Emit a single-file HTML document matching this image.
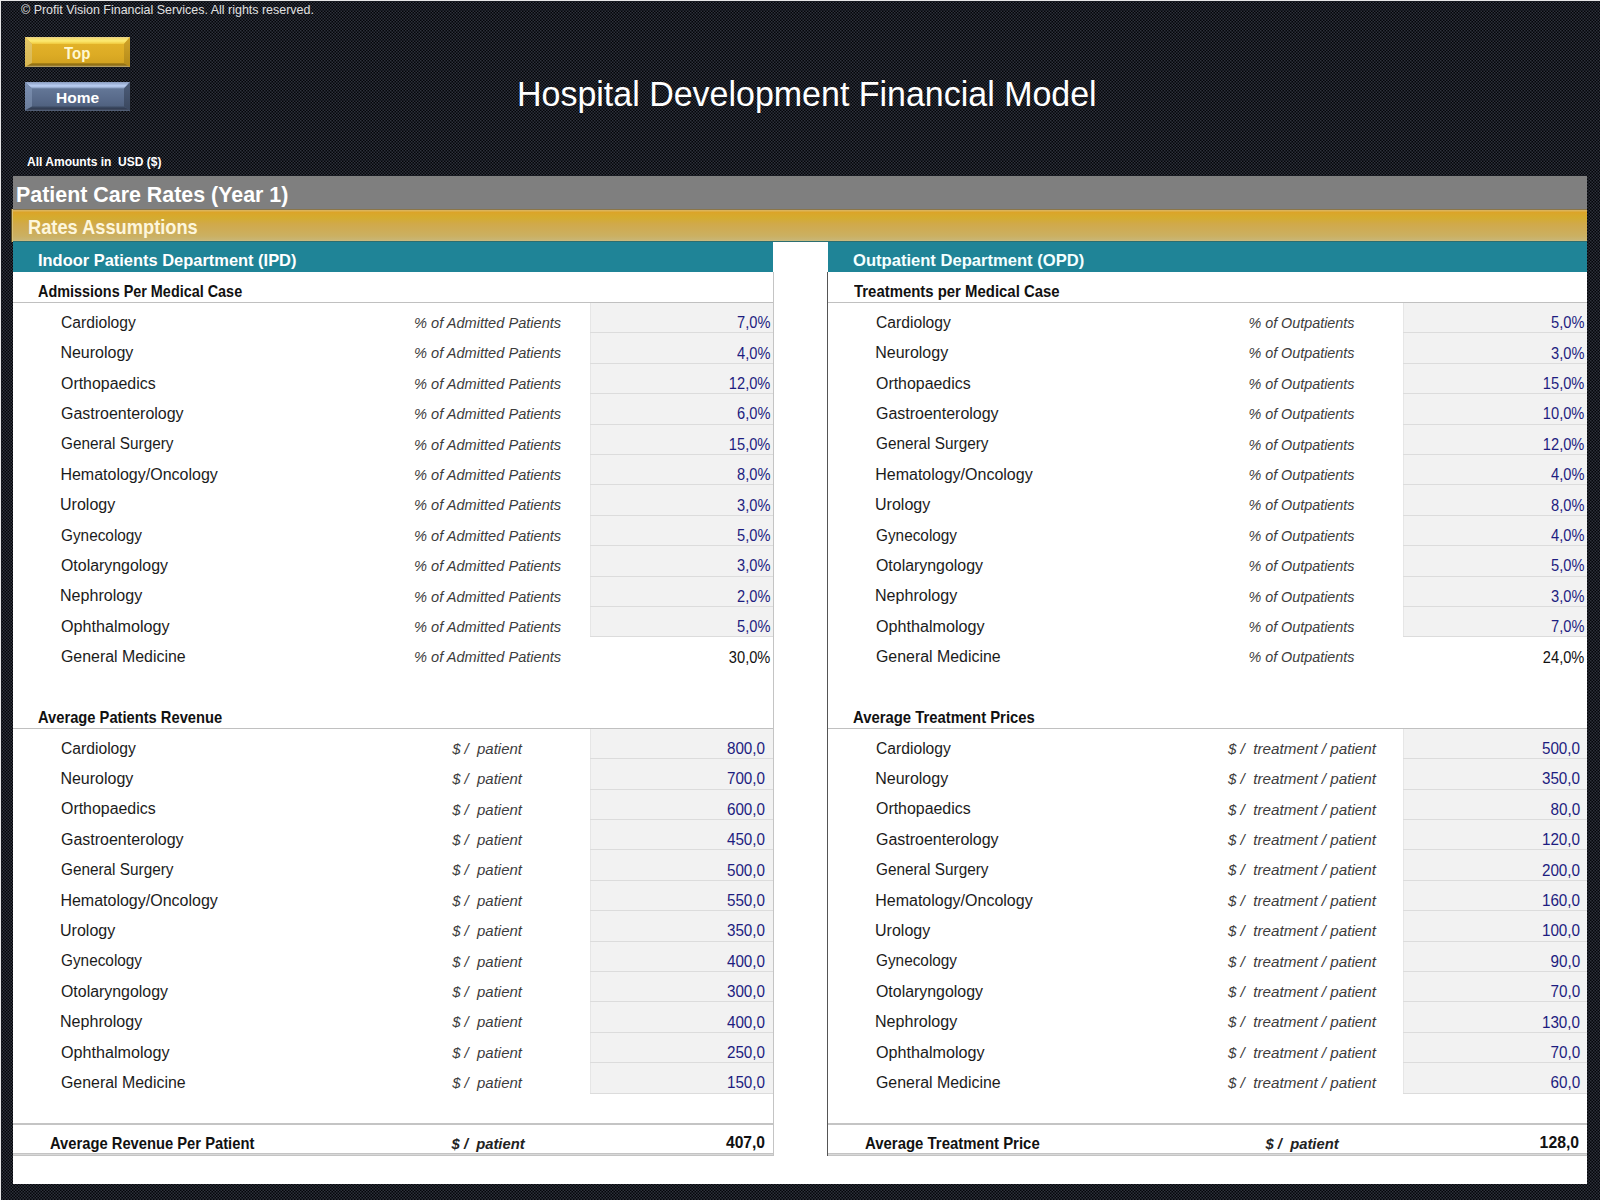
<!DOCTYPE html>
<html><head><meta charset="utf-8"><title>Hospital Development Financial Model</title>
<style>
html,body{margin:0;padding:0;width:1600px;height:1200px;overflow:hidden;}
body{position:relative;font-family:'Liberation Sans', sans-serif;}
#bg{position:absolute;left:0;top:0;width:1600px;height:1200px;background:#181b22;}
.edge{position:absolute;background:#e8e8e8;}
.t{position:absolute;white-space:pre;line-height:1;}
.cell{position:absolute;background:#f2f2f2;box-shadow:inset 1px 0 0 #e6e6e6;}
.hl{position:absolute;height:1px;}
.btn{position:absolute;left:25px;width:105px;}
.btn div{position:absolute;left:0;top:0;width:100%;height:100%;}
.btn.top{top:37px;height:30px;background:linear-gradient(#e6b62c,#dcab24 60%,#cf9f1e);}
.btn.top .t1{clip-path:polygon(0 0,100% 0,calc(100% - 6px) 7px,7px 7px);background:linear-gradient(#e6cf86 0,#f6e070 2px,#fcea70 4px,#f0c83c 7px);}
.btn.top .t2{clip-path:polygon(0 0,7px 7px,7px calc(100% - 4px),0 100%);background:linear-gradient(#e2c668,#d8b650);}
.btn.top .t3{clip-path:polygon(100% 0,100% 100%,calc(100% - 6px) calc(100% - 4px),calc(100% - 6px) 7px);background:linear-gradient(#d0a42a,#b48a18);}
.btn.top .t4{clip-path:polygon(0 100%,7px calc(100% - 4px),calc(100% - 6px) calc(100% - 4px),100% 100%);background:linear-gradient(#b08818 0,#b08818 calc(100% - 4px),#8a6a12 calc(100% - 2px),#c4b07a 100%);}
.btn.home{top:82px;height:28.5px;background:linear-gradient(#6a7e9e,#586a8a 60%,#4a5b78);}
.btn.home .t1{clip-path:polygon(0 0,100% 0,calc(100% - 6px) 6.5px,7px 6.5px);background:linear-gradient(#8a9cbe 0,#a8bce0 2.5px,#bcd0f4 4px,#7e92b4 6.5px);}
.btn.home .t2{clip-path:polygon(0 0,7px 6.5px,7px calc(100% - 4px),0 100%);background:linear-gradient(#7c90b2,#6a7c9a);}
.btn.home .t3{clip-path:polygon(100% 0,100% 100%,calc(100% - 6px) calc(100% - 4px),calc(100% - 6px) 6.5px);background:linear-gradient(#4c5c78,#3a475e);}
.btn.home .t4{clip-path:polygon(0 100%,7px calc(100% - 4px),calc(100% - 6px) calc(100% - 4px),100% 100%);background:linear-gradient(#3c4a62 0,#3c4a62 calc(100% - 4px),#303a50 calc(100% - 2px),#646c7c 100%);}
</style></head><body>
<svg id="bg" width="1600" height="1200" shape-rendering="crispEdges"><defs><pattern id="p" width="3" height="3" patternUnits="userSpaceOnUse"><rect width="3" height="3" fill="#181b22"/><rect x="0" y="0" width="1" height="1" fill="#2e313b"/><rect x="2" y="2" width="1" height="1" fill="#2e313b"/><rect x="2" y="0" width="1" height="1" fill="#040508"/><rect x="0" y="2" width="1" height="1" fill="#040508"/></pattern></defs><rect width="1600" height="1200" fill="url(#p)"/></svg>
<div class="edge" style="left:0;top:0;width:1600px;height:1px"></div>
<div class="edge" style="left:0;top:0;width:1px;height:1200px"></div>
<div class="btn top"><div class="t1"></div><div class="t2"></div><div class="t3"></div><div class="t4"></div></div>
<div class="btn home"><div class="t1"></div><div class="t2"></div><div class="t3"></div><div class="t4"></div></div>
<div style="position:absolute;left:13px;top:176px;width:1574px;height:33px;background:#7f7f7f"></div>
<div style="position:absolute;left:11px;top:208.6px;width:1576px;height:33.4px;background:linear-gradient(#8a7548 0,#8a7548 1px,#dcb45a 1px,#dcb45a 2px,#dca428 3px,#d4ac30 9px,#d1a94a 15px,#cbb062 27px,#c9b674 31px,#cbc08e 32.4px,#2c6e70 32.4px);box-shadow:inset 1px 0 0 #5e4e22,inset 2px 0 0 #d8c27c"></div>
<div style="position:absolute;left:13px;top:242px;width:1574px;height:942px;background:#fff"></div>
<div style="position:absolute;left:13px;top:242px;width:760px;height:30px;background:#1f8497"></div>
<div style="position:absolute;left:828px;top:242px;width:759px;height:30px;background:#1f8497"></div>
<div class="cell" style="left:589.5px;top:302.4px;width:183.5px;height:334.4px"></div><div class="hl" style="left:589.5px;top:332.3px;width:183.5px;background:#dcdcdc"></div><div class="hl" style="left:589.5px;top:362.7px;width:183.5px;background:#dcdcdc"></div><div class="hl" style="left:589.5px;top:393.1px;width:183.5px;background:#dcdcdc"></div><div class="hl" style="left:589.5px;top:423.5px;width:183.5px;background:#dcdcdc"></div><div class="hl" style="left:589.5px;top:453.9px;width:183.5px;background:#dcdcdc"></div><div class="hl" style="left:589.5px;top:484.3px;width:183.5px;background:#dcdcdc"></div><div class="hl" style="left:589.5px;top:514.7px;width:183.5px;background:#dcdcdc"></div><div class="hl" style="left:589.5px;top:545.1px;width:183.5px;background:#dcdcdc"></div><div class="hl" style="left:589.5px;top:575.5px;width:183.5px;background:#dcdcdc"></div><div class="hl" style="left:589.5px;top:605.9px;width:183.5px;background:#dcdcdc"></div><div class="hl" style="left:589.5px;top:636.3px;width:183.5px;background:#dcdcdc"></div><div class="cell" style="left:1402.5px;top:302.4px;width:184.5px;height:334.4px"></div><div class="hl" style="left:1402.5px;top:332.3px;width:184.5px;background:#dcdcdc"></div><div class="hl" style="left:1402.5px;top:362.7px;width:184.5px;background:#dcdcdc"></div><div class="hl" style="left:1402.5px;top:393.1px;width:184.5px;background:#dcdcdc"></div><div class="hl" style="left:1402.5px;top:423.5px;width:184.5px;background:#dcdcdc"></div><div class="hl" style="left:1402.5px;top:453.9px;width:184.5px;background:#dcdcdc"></div><div class="hl" style="left:1402.5px;top:484.3px;width:184.5px;background:#dcdcdc"></div><div class="hl" style="left:1402.5px;top:514.7px;width:184.5px;background:#dcdcdc"></div><div class="hl" style="left:1402.5px;top:545.1px;width:184.5px;background:#dcdcdc"></div><div class="hl" style="left:1402.5px;top:575.5px;width:184.5px;background:#dcdcdc"></div><div class="hl" style="left:1402.5px;top:605.9px;width:184.5px;background:#dcdcdc"></div><div class="hl" style="left:1402.5px;top:636.3px;width:184.5px;background:#dcdcdc"></div><div class="cell" style="left:589.5px;top:728.2px;width:183.5px;height:364.8px"></div><div class="hl" style="left:589.5px;top:758.1px;width:183.5px;background:#dcdcdc"></div><div class="hl" style="left:589.5px;top:788.5px;width:183.5px;background:#dcdcdc"></div><div class="hl" style="left:589.5px;top:818.9px;width:183.5px;background:#dcdcdc"></div><div class="hl" style="left:589.5px;top:849.3px;width:183.5px;background:#dcdcdc"></div><div class="hl" style="left:589.5px;top:879.7px;width:183.5px;background:#dcdcdc"></div><div class="hl" style="left:589.5px;top:910.1px;width:183.5px;background:#dcdcdc"></div><div class="hl" style="left:589.5px;top:940.5px;width:183.5px;background:#dcdcdc"></div><div class="hl" style="left:589.5px;top:970.9px;width:183.5px;background:#dcdcdc"></div><div class="hl" style="left:589.5px;top:1001.3px;width:183.5px;background:#dcdcdc"></div><div class="hl" style="left:589.5px;top:1031.7px;width:183.5px;background:#dcdcdc"></div><div class="hl" style="left:589.5px;top:1062.1px;width:183.5px;background:#dcdcdc"></div><div class="hl" style="left:589.5px;top:1092.5px;width:183.5px;background:#dcdcdc"></div><div class="cell" style="left:1402.5px;top:728.2px;width:184.5px;height:364.8px"></div><div class="hl" style="left:1402.5px;top:758.1px;width:184.5px;background:#dcdcdc"></div><div class="hl" style="left:1402.5px;top:788.5px;width:184.5px;background:#dcdcdc"></div><div class="hl" style="left:1402.5px;top:818.9px;width:184.5px;background:#dcdcdc"></div><div class="hl" style="left:1402.5px;top:849.3px;width:184.5px;background:#dcdcdc"></div><div class="hl" style="left:1402.5px;top:879.7px;width:184.5px;background:#dcdcdc"></div><div class="hl" style="left:1402.5px;top:910.1px;width:184.5px;background:#dcdcdc"></div><div class="hl" style="left:1402.5px;top:940.5px;width:184.5px;background:#dcdcdc"></div><div class="hl" style="left:1402.5px;top:970.9px;width:184.5px;background:#dcdcdc"></div><div class="hl" style="left:1402.5px;top:1001.3px;width:184.5px;background:#dcdcdc"></div><div class="hl" style="left:1402.5px;top:1031.7px;width:184.5px;background:#dcdcdc"></div><div class="hl" style="left:1402.5px;top:1062.1px;width:184.5px;background:#dcdcdc"></div><div class="hl" style="left:1402.5px;top:1092.5px;width:184.5px;background:#dcdcdc"></div>
<div class="hl" style="left:13px;top:301.7px;width:760px;background:#c0c0c0;height:1.4px"></div>
<div class="hl" style="left:828px;top:301.7px;width:759px;background:#c0c0c0;height:1.4px"></div>
<div class="hl" style="left:13px;top:727.5px;width:760px;background:#c0c0c0;height:1.4px"></div>
<div class="hl" style="left:828px;top:727.5px;width:759px;background:#c0c0c0;height:1.4px"></div>
<div class="hl" style="left:13px;top:1123px;width:760px;background:#c4c4c4;height:1.6px"></div>
<div class="hl" style="left:828px;top:1123px;width:759px;background:#c4c4c4;height:1.6px"></div>
<div class="hl" style="left:13px;top:1152.8px;width:761px;height:3.2px;background:linear-gradient(#c4c4c4 0 35%,#d8d8d8 35% 60%,#c4c4c4 60%)"></div>
<div class="hl" style="left:828px;top:1152.8px;width:759px;height:3.2px;background:linear-gradient(#c4c4c4 0 35%,#d8d8d8 35% 60%,#c4c4c4 60%)"></div>
<div style="position:absolute;left:772.5px;top:272px;width:1.5px;height:884px;background:#c4c4c4"></div>
<div style="position:absolute;left:827px;top:272px;width:1.2px;height:884px;background:#555"></div>

<span class="t" style="left:20.50px;top:2.59px;font-size:13px;color:#e0e0e0;transform:scaleX(0.9586);transform-origin:left 50%;">© Profit Vision Financial Services. All rights reserved.</span><span class="t" style="left:516.79px;top:76.77px;font-size:35.5px;color:#ffffff;transform:scaleX(0.9569);transform-origin:left 50%;">Hospital Development Financial Model</span><span class="t" style="left:27.11px;top:154.69px;font-size:13px;font-weight:700;color:#ffffff;transform:scaleX(0.9252);transform-origin:left 50%;">All Amounts in  USD ($)</span><span class="t" style="left:15.80px;top:183.98px;font-size:22.5px;font-weight:700;color:#ffffff;transform:scaleX(0.9510);transform-origin:left 50%;">Patient Care Rates (Year 1)</span><span class="t" style="left:27.72px;top:217.84px;font-size:19.3px;font-weight:700;color:#fdf6dc;transform:scaleX(0.9468);transform-origin:left 50%;">Rates Assumptions</span><span class="t" style="left:37.55px;top:251.57px;font-size:16.4px;font-weight:700;color:#ffffff;transform:scaleX(1.0029);transform-origin:left 50%;">Indoor Patients Department (IPD)</span><span class="t" style="left:852.93px;top:251.57px;font-size:16.4px;font-weight:700;color:#f4ffff;transform:scaleX(1.0115);transform-origin:left 50%;">Outpatient Department (OPD)</span><span class="t" style="left:64.35px;top:46.08px;font-size:16px;font-weight:700;color:#fff8d0;transform:scaleX(0.9383);transform-origin:left 50%;">Top</span><span class="t" style="left:55.64px;top:89.65px;font-size:15px;font-weight:700;color:#ffffff;transform:scaleX(1.0350);transform-origin:left 50%;">Home</span><span class="t" style="left:38.22px;top:283.39px;font-size:16.5px;font-weight:700;color:#111;transform:scaleX(0.8730);transform-origin:left 50%;">Admissions Per Medical Case</span><span class="t" style="left:854.11px;top:283.39px;font-size:16.5px;font-weight:700;color:#111;transform:scaleX(0.9039);transform-origin:left 50%;">Treatments per Medical Case</span><span class="t" style="left:38.16px;top:709.20px;font-size:16.5px;font-weight:700;color:#111;transform:scaleX(0.8912);transform-origin:left 50%;">Average Patients Revenue</span><span class="t" style="left:853.20px;top:709.20px;font-size:16.5px;font-weight:700;color:#111;transform:scaleX(0.8996);transform-origin:left 50%;">Average Treatment Prices</span><span class="t" style="left:60.69px;top:314.78px;font-size:16px;color:#1b1b1b;transform:scaleX(0.9787);transform-origin:left 50%;">Cardiology</span><span class="t" style="left:875.54px;top:314.78px;font-size:16px;color:#1b1b1b;transform:scaleX(0.9787);transform-origin:left 50%;">Cardiology</span><span class="t" style="left:60.69px;top:740.58px;font-size:16px;color:#1b1b1b;transform:scaleX(0.9787);transform-origin:left 50%;">Cardiology</span><span class="t" style="left:875.54px;top:740.58px;font-size:16px;color:#1b1b1b;transform:scaleX(0.9787);transform-origin:left 50%;">Cardiology</span><span class="t" style="left:411.68px;top:314.95px;font-size:15px;font-style:italic;color:#3c3c3c;transform:scaleX(0.9725);transform-origin:center 50%;">% of Admitted Patients</span><span class="t" style="left:452.48px;top:740.75px;font-size:15px;font-style:italic;color:#3c3c3c;transform:scaleX(0.9960);transform-origin:center 50%;">$ /  patient</span><span class="t" style="left:733.65px;top:315.18px;font-size:16px;color:#1d1d80;transform:scaleX(0.9147);transform-origin:right 50%;">7,0%</span><span class="t" style="left:725.40px;top:740.98px;font-size:16px;color:#1d1d80;transform:scaleX(0.9525);transform-origin:right 50%;">800,0</span><span class="t" style="left:1246.07px;top:314.95px;font-size:15px;font-style:italic;color:#3c3c3c;transform:scaleX(0.9566);transform-origin:center 50%;">% of Outpatients</span><span class="t" style="left:1228.71px;top:740.75px;font-size:15px;font-style:italic;color:#3c3c3c;transform:scaleX(1.0150);transform-origin:center 50%;">$ /  treatment / patient</span><span class="t" style="left:1548.15px;top:315.18px;font-size:16px;color:#1d1d80;transform:scaleX(0.9147);transform-origin:right 50%;">5,0%</span><span class="t" style="left:1539.70px;top:740.98px;font-size:16px;color:#1d1d80;transform:scaleX(0.9525);transform-origin:right 50%;">500,0</span><span class="t" style="left:60.39px;top:345.18px;font-size:16px;color:#1b1b1b;">Neurology</span><span class="t" style="left:875.24px;top:345.18px;font-size:16px;color:#1b1b1b;">Neurology</span><span class="t" style="left:60.39px;top:770.98px;font-size:16px;color:#1b1b1b;">Neurology</span><span class="t" style="left:875.24px;top:770.98px;font-size:16px;color:#1b1b1b;">Neurology</span><span class="t" style="left:411.68px;top:345.35px;font-size:15px;font-style:italic;color:#3c3c3c;transform:scaleX(0.9725);transform-origin:center 50%;">% of Admitted Patients</span><span class="t" style="left:452.48px;top:771.15px;font-size:15px;font-style:italic;color:#3c3c3c;transform:scaleX(0.9960);transform-origin:center 50%;">$ /  patient</span><span class="t" style="left:733.65px;top:345.58px;font-size:16px;color:#1d1d80;transform:scaleX(0.9147);transform-origin:right 50%;">4,0%</span><span class="t" style="left:725.40px;top:771.38px;font-size:16px;color:#1d1d80;transform:scaleX(0.9525);transform-origin:right 50%;">700,0</span><span class="t" style="left:1246.07px;top:345.35px;font-size:15px;font-style:italic;color:#3c3c3c;transform:scaleX(0.9566);transform-origin:center 50%;">% of Outpatients</span><span class="t" style="left:1228.71px;top:771.15px;font-size:15px;font-style:italic;color:#3c3c3c;transform:scaleX(1.0150);transform-origin:center 50%;">$ /  treatment / patient</span><span class="t" style="left:1548.15px;top:345.58px;font-size:16px;color:#1d1d80;transform:scaleX(0.9147);transform-origin:right 50%;">3,0%</span><span class="t" style="left:1539.70px;top:771.38px;font-size:16px;color:#1d1d80;transform:scaleX(0.9525);transform-origin:right 50%;">350,0</span><span class="t" style="left:60.99px;top:375.58px;font-size:16px;color:#1b1b1b;transform:scaleX(0.9944);transform-origin:left 50%;">Orthopaedics</span><span class="t" style="left:875.84px;top:375.58px;font-size:16px;color:#1b1b1b;transform:scaleX(0.9944);transform-origin:left 50%;">Orthopaedics</span><span class="t" style="left:60.99px;top:801.38px;font-size:16px;color:#1b1b1b;transform:scaleX(0.9944);transform-origin:left 50%;">Orthopaedics</span><span class="t" style="left:875.84px;top:801.38px;font-size:16px;color:#1b1b1b;transform:scaleX(0.9944);transform-origin:left 50%;">Orthopaedics</span><span class="t" style="left:411.68px;top:375.75px;font-size:15px;font-style:italic;color:#3c3c3c;transform:scaleX(0.9725);transform-origin:center 50%;">% of Admitted Patients</span><span class="t" style="left:452.48px;top:801.55px;font-size:15px;font-style:italic;color:#3c3c3c;transform:scaleX(0.9960);transform-origin:center 50%;">$ /  patient</span><span class="t" style="left:724.65px;top:375.98px;font-size:16px;color:#1d1d80;transform:scaleX(0.9147);transform-origin:right 50%;">12,0%</span><span class="t" style="left:725.40px;top:801.78px;font-size:16px;color:#1d1d80;transform:scaleX(0.9525);transform-origin:right 50%;">600,0</span><span class="t" style="left:1246.07px;top:375.75px;font-size:15px;font-style:italic;color:#3c3c3c;transform:scaleX(0.9566);transform-origin:center 50%;">% of Outpatients</span><span class="t" style="left:1228.71px;top:801.55px;font-size:15px;font-style:italic;color:#3c3c3c;transform:scaleX(1.0150);transform-origin:center 50%;">$ /  treatment / patient</span><span class="t" style="left:1539.15px;top:375.98px;font-size:16px;color:#1d1d80;transform:scaleX(0.9147);transform-origin:right 50%;">15,0%</span><span class="t" style="left:1548.69px;top:801.78px;font-size:16px;color:#1d1d80;transform:scaleX(0.9525);transform-origin:right 50%;">80,0</span><span class="t" style="left:60.67px;top:405.98px;font-size:16px;color:#1b1b1b;transform:scaleX(0.9989);transform-origin:left 50%;">Gastroenterology</span><span class="t" style="left:875.52px;top:405.98px;font-size:16px;color:#1b1b1b;transform:scaleX(0.9989);transform-origin:left 50%;">Gastroenterology</span><span class="t" style="left:60.67px;top:831.78px;font-size:16px;color:#1b1b1b;transform:scaleX(0.9989);transform-origin:left 50%;">Gastroenterology</span><span class="t" style="left:875.52px;top:831.78px;font-size:16px;color:#1b1b1b;transform:scaleX(0.9989);transform-origin:left 50%;">Gastroenterology</span><span class="t" style="left:411.68px;top:406.15px;font-size:15px;font-style:italic;color:#3c3c3c;transform:scaleX(0.9725);transform-origin:center 50%;">% of Admitted Patients</span><span class="t" style="left:452.48px;top:831.95px;font-size:15px;font-style:italic;color:#3c3c3c;transform:scaleX(0.9960);transform-origin:center 50%;">$ /  patient</span><span class="t" style="left:733.65px;top:406.38px;font-size:16px;color:#1d1d80;transform:scaleX(0.9147);transform-origin:right 50%;">6,0%</span><span class="t" style="left:725.40px;top:832.18px;font-size:16px;color:#1d1d80;transform:scaleX(0.9525);transform-origin:right 50%;">450,0</span><span class="t" style="left:1246.07px;top:406.15px;font-size:15px;font-style:italic;color:#3c3c3c;transform:scaleX(0.9566);transform-origin:center 50%;">% of Outpatients</span><span class="t" style="left:1228.71px;top:831.95px;font-size:15px;font-style:italic;color:#3c3c3c;transform:scaleX(1.0150);transform-origin:center 50%;">$ /  treatment / patient</span><span class="t" style="left:1539.15px;top:406.38px;font-size:16px;color:#1d1d80;transform:scaleX(0.9147);transform-origin:right 50%;">10,0%</span><span class="t" style="left:1539.70px;top:832.18px;font-size:16px;color:#1d1d80;transform:scaleX(0.9525);transform-origin:right 50%;">120,0</span><span class="t" style="left:60.72px;top:436.38px;font-size:16px;color:#1b1b1b;transform:scaleX(0.9578);transform-origin:left 50%;">General Surgery</span><span class="t" style="left:875.57px;top:436.38px;font-size:16px;color:#1b1b1b;transform:scaleX(0.9578);transform-origin:left 50%;">General Surgery</span><span class="t" style="left:60.72px;top:862.18px;font-size:16px;color:#1b1b1b;transform:scaleX(0.9578);transform-origin:left 50%;">General Surgery</span><span class="t" style="left:875.57px;top:862.18px;font-size:16px;color:#1b1b1b;transform:scaleX(0.9578);transform-origin:left 50%;">General Surgery</span><span class="t" style="left:411.68px;top:436.55px;font-size:15px;font-style:italic;color:#3c3c3c;transform:scaleX(0.9725);transform-origin:center 50%;">% of Admitted Patients</span><span class="t" style="left:452.48px;top:862.35px;font-size:15px;font-style:italic;color:#3c3c3c;transform:scaleX(0.9960);transform-origin:center 50%;">$ /  patient</span><span class="t" style="left:724.65px;top:436.78px;font-size:16px;color:#1d1d80;transform:scaleX(0.9147);transform-origin:right 50%;">15,0%</span><span class="t" style="left:725.40px;top:862.58px;font-size:16px;color:#1d1d80;transform:scaleX(0.9525);transform-origin:right 50%;">500,0</span><span class="t" style="left:1246.07px;top:436.55px;font-size:15px;font-style:italic;color:#3c3c3c;transform:scaleX(0.9566);transform-origin:center 50%;">% of Outpatients</span><span class="t" style="left:1228.71px;top:862.35px;font-size:15px;font-style:italic;color:#3c3c3c;transform:scaleX(1.0150);transform-origin:center 50%;">$ /  treatment / patient</span><span class="t" style="left:1539.15px;top:436.78px;font-size:16px;color:#1d1d80;transform:scaleX(0.9147);transform-origin:right 50%;">12,0%</span><span class="t" style="left:1539.70px;top:862.58px;font-size:16px;color:#1d1d80;transform:scaleX(0.9525);transform-origin:right 50%;">200,0</span><span class="t" style="left:60.39px;top:466.78px;font-size:16px;color:#1b1b1b;">Hematology/Oncology</span><span class="t" style="left:875.24px;top:466.78px;font-size:16px;color:#1b1b1b;">Hematology/Oncology</span><span class="t" style="left:60.39px;top:892.58px;font-size:16px;color:#1b1b1b;">Hematology/Oncology</span><span class="t" style="left:875.24px;top:892.58px;font-size:16px;color:#1b1b1b;">Hematology/Oncology</span><span class="t" style="left:411.68px;top:466.95px;font-size:15px;font-style:italic;color:#3c3c3c;transform:scaleX(0.9725);transform-origin:center 50%;">% of Admitted Patients</span><span class="t" style="left:452.48px;top:892.75px;font-size:15px;font-style:italic;color:#3c3c3c;transform:scaleX(0.9960);transform-origin:center 50%;">$ /  patient</span><span class="t" style="left:733.65px;top:467.18px;font-size:16px;color:#1d1d80;transform:scaleX(0.9147);transform-origin:right 50%;">8,0%</span><span class="t" style="left:725.40px;top:892.98px;font-size:16px;color:#1d1d80;transform:scaleX(0.9525);transform-origin:right 50%;">550,0</span><span class="t" style="left:1246.07px;top:466.95px;font-size:15px;font-style:italic;color:#3c3c3c;transform:scaleX(0.9566);transform-origin:center 50%;">% of Outpatients</span><span class="t" style="left:1228.71px;top:892.75px;font-size:15px;font-style:italic;color:#3c3c3c;transform:scaleX(1.0150);transform-origin:center 50%;">$ /  treatment / patient</span><span class="t" style="left:1548.15px;top:467.18px;font-size:16px;color:#1d1d80;transform:scaleX(0.9147);transform-origin:right 50%;">4,0%</span><span class="t" style="left:1539.70px;top:892.98px;font-size:16px;color:#1d1d80;transform:scaleX(0.9525);transform-origin:right 50%;">160,0</span><span class="t" style="left:60.45px;top:497.18px;font-size:16px;color:#1b1b1b;transform:scaleX(1.0019);transform-origin:left 50%;">Urology</span><span class="t" style="left:875.30px;top:497.18px;font-size:16px;color:#1b1b1b;transform:scaleX(1.0019);transform-origin:left 50%;">Urology</span><span class="t" style="left:60.45px;top:922.98px;font-size:16px;color:#1b1b1b;transform:scaleX(1.0019);transform-origin:left 50%;">Urology</span><span class="t" style="left:875.30px;top:922.98px;font-size:16px;color:#1b1b1b;transform:scaleX(1.0019);transform-origin:left 50%;">Urology</span><span class="t" style="left:411.68px;top:497.35px;font-size:15px;font-style:italic;color:#3c3c3c;transform:scaleX(0.9725);transform-origin:center 50%;">% of Admitted Patients</span><span class="t" style="left:452.48px;top:923.15px;font-size:15px;font-style:italic;color:#3c3c3c;transform:scaleX(0.9960);transform-origin:center 50%;">$ /  patient</span><span class="t" style="left:733.65px;top:497.58px;font-size:16px;color:#1d1d80;transform:scaleX(0.9147);transform-origin:right 50%;">3,0%</span><span class="t" style="left:725.40px;top:923.38px;font-size:16px;color:#1d1d80;transform:scaleX(0.9525);transform-origin:right 50%;">350,0</span><span class="t" style="left:1246.07px;top:497.35px;font-size:15px;font-style:italic;color:#3c3c3c;transform:scaleX(0.9566);transform-origin:center 50%;">% of Outpatients</span><span class="t" style="left:1228.71px;top:923.15px;font-size:15px;font-style:italic;color:#3c3c3c;transform:scaleX(1.0150);transform-origin:center 50%;">$ /  treatment / patient</span><span class="t" style="left:1548.15px;top:497.58px;font-size:16px;color:#1d1d80;transform:scaleX(0.9147);transform-origin:right 50%;">8,0%</span><span class="t" style="left:1539.70px;top:923.38px;font-size:16px;color:#1d1d80;transform:scaleX(0.9525);transform-origin:right 50%;">100,0</span><span class="t" style="left:60.72px;top:527.58px;font-size:16px;color:#1b1b1b;transform:scaleX(0.9591);transform-origin:left 50%;">Gynecology</span><span class="t" style="left:875.57px;top:527.58px;font-size:16px;color:#1b1b1b;transform:scaleX(0.9591);transform-origin:left 50%;">Gynecology</span><span class="t" style="left:60.72px;top:953.38px;font-size:16px;color:#1b1b1b;transform:scaleX(0.9591);transform-origin:left 50%;">Gynecology</span><span class="t" style="left:875.57px;top:953.38px;font-size:16px;color:#1b1b1b;transform:scaleX(0.9591);transform-origin:left 50%;">Gynecology</span><span class="t" style="left:411.68px;top:527.75px;font-size:15px;font-style:italic;color:#3c3c3c;transform:scaleX(0.9725);transform-origin:center 50%;">% of Admitted Patients</span><span class="t" style="left:452.48px;top:953.55px;font-size:15px;font-style:italic;color:#3c3c3c;transform:scaleX(0.9960);transform-origin:center 50%;">$ /  patient</span><span class="t" style="left:733.65px;top:527.98px;font-size:16px;color:#1d1d80;transform:scaleX(0.9147);transform-origin:right 50%;">5,0%</span><span class="t" style="left:725.40px;top:953.78px;font-size:16px;color:#1d1d80;transform:scaleX(0.9525);transform-origin:right 50%;">400,0</span><span class="t" style="left:1246.07px;top:527.75px;font-size:15px;font-style:italic;color:#3c3c3c;transform:scaleX(0.9566);transform-origin:center 50%;">% of Outpatients</span><span class="t" style="left:1228.71px;top:953.55px;font-size:15px;font-style:italic;color:#3c3c3c;transform:scaleX(1.0150);transform-origin:center 50%;">$ /  treatment / patient</span><span class="t" style="left:1548.15px;top:527.98px;font-size:16px;color:#1d1d80;transform:scaleX(0.9147);transform-origin:right 50%;">4,0%</span><span class="t" style="left:1548.69px;top:953.78px;font-size:16px;color:#1d1d80;transform:scaleX(0.9525);transform-origin:right 50%;">90,0</span><span class="t" style="left:60.99px;top:557.98px;font-size:16px;color:#1b1b1b;transform:scaleX(0.9942);transform-origin:left 50%;">Otolaryngology</span><span class="t" style="left:875.84px;top:557.98px;font-size:16px;color:#1b1b1b;transform:scaleX(0.9942);transform-origin:left 50%;">Otolaryngology</span><span class="t" style="left:60.99px;top:983.78px;font-size:16px;color:#1b1b1b;transform:scaleX(0.9942);transform-origin:left 50%;">Otolaryngology</span><span class="t" style="left:875.84px;top:983.78px;font-size:16px;color:#1b1b1b;transform:scaleX(0.9942);transform-origin:left 50%;">Otolaryngology</span><span class="t" style="left:411.68px;top:558.15px;font-size:15px;font-style:italic;color:#3c3c3c;transform:scaleX(0.9725);transform-origin:center 50%;">% of Admitted Patients</span><span class="t" style="left:452.48px;top:983.95px;font-size:15px;font-style:italic;color:#3c3c3c;transform:scaleX(0.9960);transform-origin:center 50%;">$ /  patient</span><span class="t" style="left:733.65px;top:558.38px;font-size:16px;color:#1d1d80;transform:scaleX(0.9147);transform-origin:right 50%;">3,0%</span><span class="t" style="left:725.40px;top:984.18px;font-size:16px;color:#1d1d80;transform:scaleX(0.9525);transform-origin:right 50%;">300,0</span><span class="t" style="left:1246.07px;top:558.15px;font-size:15px;font-style:italic;color:#3c3c3c;transform:scaleX(0.9566);transform-origin:center 50%;">% of Outpatients</span><span class="t" style="left:1228.71px;top:983.95px;font-size:15px;font-style:italic;color:#3c3c3c;transform:scaleX(1.0150);transform-origin:center 50%;">$ /  treatment / patient</span><span class="t" style="left:1548.15px;top:558.38px;font-size:16px;color:#1d1d80;transform:scaleX(0.9147);transform-origin:right 50%;">5,0%</span><span class="t" style="left:1548.69px;top:984.18px;font-size:16px;color:#1d1d80;transform:scaleX(0.9525);transform-origin:right 50%;">70,0</span><span class="t" style="left:60.39px;top:588.38px;font-size:16px;color:#1b1b1b;transform:scaleX(1.0043);transform-origin:left 50%;">Nephrology</span><span class="t" style="left:875.24px;top:588.38px;font-size:16px;color:#1b1b1b;transform:scaleX(1.0043);transform-origin:left 50%;">Nephrology</span><span class="t" style="left:60.39px;top:1014.18px;font-size:16px;color:#1b1b1b;transform:scaleX(1.0043);transform-origin:left 50%;">Nephrology</span><span class="t" style="left:875.24px;top:1014.18px;font-size:16px;color:#1b1b1b;transform:scaleX(1.0043);transform-origin:left 50%;">Nephrology</span><span class="t" style="left:411.68px;top:588.55px;font-size:15px;font-style:italic;color:#3c3c3c;transform:scaleX(0.9725);transform-origin:center 50%;">% of Admitted Patients</span><span class="t" style="left:452.48px;top:1014.35px;font-size:15px;font-style:italic;color:#3c3c3c;transform:scaleX(0.9960);transform-origin:center 50%;">$ /  patient</span><span class="t" style="left:733.65px;top:588.78px;font-size:16px;color:#1d1d80;transform:scaleX(0.9147);transform-origin:right 50%;">2,0%</span><span class="t" style="left:725.40px;top:1014.58px;font-size:16px;color:#1d1d80;transform:scaleX(0.9525);transform-origin:right 50%;">400,0</span><span class="t" style="left:1246.07px;top:588.55px;font-size:15px;font-style:italic;color:#3c3c3c;transform:scaleX(0.9566);transform-origin:center 50%;">% of Outpatients</span><span class="t" style="left:1228.71px;top:1014.35px;font-size:15px;font-style:italic;color:#3c3c3c;transform:scaleX(1.0150);transform-origin:center 50%;">$ /  treatment / patient</span><span class="t" style="left:1548.15px;top:588.78px;font-size:16px;color:#1d1d80;transform:scaleX(0.9147);transform-origin:right 50%;">3,0%</span><span class="t" style="left:1539.70px;top:1014.58px;font-size:16px;color:#1d1d80;transform:scaleX(0.9525);transform-origin:right 50%;">130,0</span><span class="t" style="left:60.97px;top:618.78px;font-size:16px;color:#1b1b1b;transform:scaleX(1.0083);transform-origin:left 50%;">Ophthalmology</span><span class="t" style="left:875.82px;top:618.78px;font-size:16px;color:#1b1b1b;transform:scaleX(1.0083);transform-origin:left 50%;">Ophthalmology</span><span class="t" style="left:60.97px;top:1044.58px;font-size:16px;color:#1b1b1b;transform:scaleX(1.0083);transform-origin:left 50%;">Ophthalmology</span><span class="t" style="left:875.82px;top:1044.58px;font-size:16px;color:#1b1b1b;transform:scaleX(1.0083);transform-origin:left 50%;">Ophthalmology</span><span class="t" style="left:411.68px;top:618.95px;font-size:15px;font-style:italic;color:#3c3c3c;transform:scaleX(0.9725);transform-origin:center 50%;">% of Admitted Patients</span><span class="t" style="left:452.48px;top:1044.75px;font-size:15px;font-style:italic;color:#3c3c3c;transform:scaleX(0.9960);transform-origin:center 50%;">$ /  patient</span><span class="t" style="left:733.65px;top:619.18px;font-size:16px;color:#1d1d80;transform:scaleX(0.9147);transform-origin:right 50%;">5,0%</span><span class="t" style="left:725.40px;top:1044.98px;font-size:16px;color:#1d1d80;transform:scaleX(0.9525);transform-origin:right 50%;">250,0</span><span class="t" style="left:1246.07px;top:618.95px;font-size:15px;font-style:italic;color:#3c3c3c;transform:scaleX(0.9566);transform-origin:center 50%;">% of Outpatients</span><span class="t" style="left:1228.71px;top:1044.75px;font-size:15px;font-style:italic;color:#3c3c3c;transform:scaleX(1.0150);transform-origin:center 50%;">$ /  treatment / patient</span><span class="t" style="left:1548.15px;top:619.18px;font-size:16px;color:#1d1d80;transform:scaleX(0.9147);transform-origin:right 50%;">7,0%</span><span class="t" style="left:1548.69px;top:1044.98px;font-size:16px;color:#1d1d80;transform:scaleX(0.9525);transform-origin:right 50%;">70,0</span><span class="t" style="left:60.68px;top:649.18px;font-size:16px;color:#1b1b1b;transform:scaleX(0.9940);transform-origin:left 50%;">General Medicine</span><span class="t" style="left:875.53px;top:649.18px;font-size:16px;color:#1b1b1b;transform:scaleX(0.9940);transform-origin:left 50%;">General Medicine</span><span class="t" style="left:60.68px;top:1074.98px;font-size:16px;color:#1b1b1b;transform:scaleX(0.9940);transform-origin:left 50%;">General Medicine</span><span class="t" style="left:875.53px;top:1074.98px;font-size:16px;color:#1b1b1b;transform:scaleX(0.9940);transform-origin:left 50%;">General Medicine</span><span class="t" style="left:411.68px;top:649.35px;font-size:15px;font-style:italic;color:#3c3c3c;transform:scaleX(0.9725);transform-origin:center 50%;">% of Admitted Patients</span><span class="t" style="left:452.48px;top:1075.15px;font-size:15px;font-style:italic;color:#3c3c3c;transform:scaleX(0.9960);transform-origin:center 50%;">$ /  patient</span><span class="t" style="left:724.65px;top:649.58px;font-size:16px;color:#111;transform:scaleX(0.9147);transform-origin:right 50%;">30,0%</span><span class="t" style="left:725.40px;top:1075.38px;font-size:16px;color:#1d1d80;transform:scaleX(0.9525);transform-origin:right 50%;">150,0</span><span class="t" style="left:1246.07px;top:649.35px;font-size:15px;font-style:italic;color:#3c3c3c;transform:scaleX(0.9566);transform-origin:center 50%;">% of Outpatients</span><span class="t" style="left:1228.71px;top:1075.15px;font-size:15px;font-style:italic;color:#3c3c3c;transform:scaleX(1.0150);transform-origin:center 50%;">$ /  treatment / patient</span><span class="t" style="left:1539.15px;top:649.58px;font-size:16px;color:#111;transform:scaleX(0.9147);transform-origin:right 50%;">24,0%</span><span class="t" style="left:1548.69px;top:1075.38px;font-size:16px;color:#1d1d80;transform:scaleX(0.9525);transform-origin:right 50%;">60,0</span><span class="t" style="left:49.71px;top:1134.80px;font-size:16.5px;font-weight:700;color:#111;transform:scaleX(0.8935);transform-origin:left 50%;">Average Revenue Per Patient</span><span class="t" style="left:450.83px;top:1135.95px;font-size:15px;font-weight:700;font-style:italic;color:#222;transform:scaleX(0.9851);transform-origin:center 50%;">$ /  patient</span><span class="t" style="left:725.15px;top:1135.18px;font-size:16px;font-weight:700;color:#111;transform:scaleX(0.9765);transform-origin:right 50%;">407,0</span><span class="t" style="left:864.75px;top:1134.80px;font-size:16.5px;font-weight:700;color:#111;transform:scaleX(0.9056);transform-origin:left 50%;">Average Treatment Price</span><span class="t" style="left:1265.08px;top:1135.95px;font-size:15px;font-weight:700;font-style:italic;color:#222;transform:scaleX(0.9857);transform-origin:center 50%;">$ /  patient</span><span class="t" style="left:1539.35px;top:1135.18px;font-size:16px;font-weight:700;color:#111;transform:scaleX(0.9845);transform-origin:right 50%;">128,0</span>
</body></html>
